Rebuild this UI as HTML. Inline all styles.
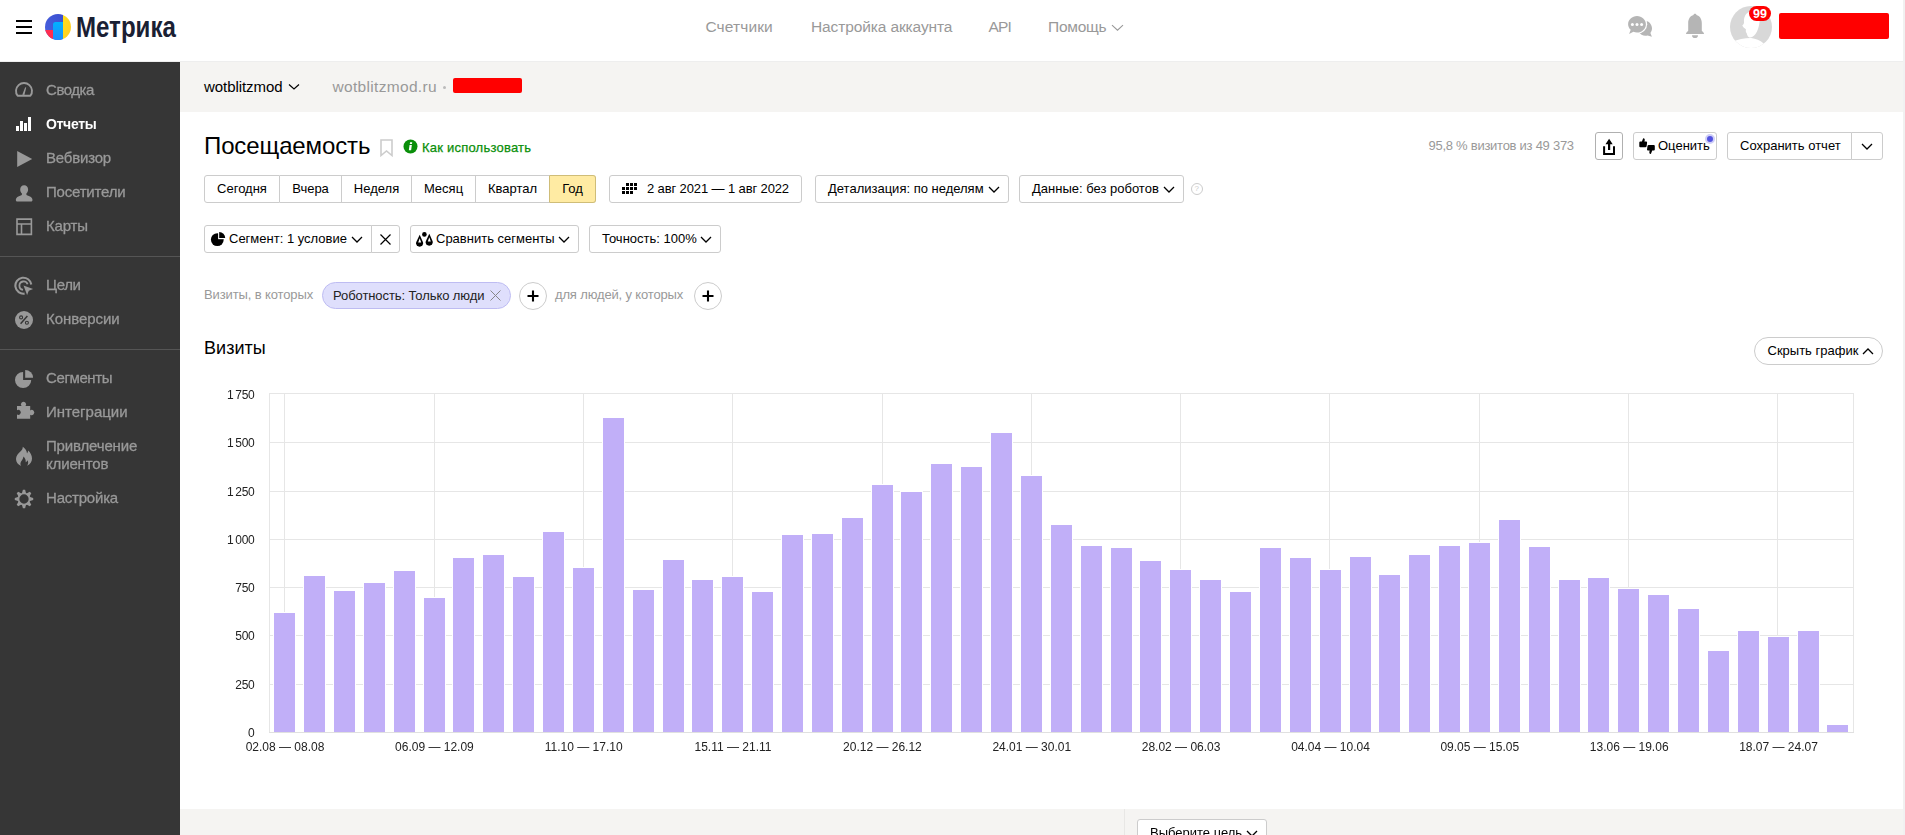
<!DOCTYPE html>
<html lang="ru">
<head>
<meta charset="utf-8">
<title>Посещаемость — Яндекс.Метрика</title>
<style>
*{box-sizing:border-box;margin:0;padding:0}
html,body{width:1905px;height:835px;overflow:hidden;background:#fff}
body{position:relative;font-family:"Liberation Sans",Arial,sans-serif;font-size:13px;color:#000}
.abs{position:absolute}
.t{position:absolute;white-space:nowrap;line-height:1}
/* header */
.header{position:absolute;left:0;top:0;width:1905px;height:62px;background:#fff;border-bottom:1px solid #eee}
.burger{position:absolute;left:16px;top:20px;width:16px;height:14px}
.burger i{position:absolute;left:0;width:16px;height:2px;background:#000}
.nav{color:#999;font-size:15.500px}
/* sidebar */
.sidebar{position:absolute;left:0;top:62px;width:180px;height:773px;background:#363636}
.sidebar .sep{position:absolute;left:0;width:180px;height:1px;background:#555}
.mi{position:absolute;left:46px;color:#999;font-size:15px;white-space:nowrap;line-height:18px;-webkit-text-stroke:.3px #999;will-change:transform}
.mi.act{color:#fff;font-weight:bold;font-size:14px;-webkit-text-stroke:0}
.ic{position:absolute}
/* band */
.band{position:absolute;left:180px;top:62px;width:1723px;height:50px;background:#f5f4f2}
.strip{position:absolute;left:1903px;top:0;width:2px;height:835px;background:#f1f1f1}
.bottom{position:absolute;left:180px;top:809px;width:1723px;height:26px;background:#f5f4f2}
/* buttons */
.btn{position:absolute;height:28px;border:1px solid #ccc;border-radius:3px;background:#fff;font-size:13px;line-height:26px;white-space:nowrap;color:#000}
.btn .t{line-height:26px;top:0}
.grp{position:absolute;left:204px;top:175px;height:28px;display:flex}
.grp div{height:28px;border:1px solid #ccc;border-left-width:0;line-height:26px;text-align:center;font-size:13px;background:#fff}
.grp div:first-child{border-left-width:1px;border-radius:3px 0 0 3px}
.grp div:last-child{border-radius:0 3px 3px 0;background:#ffeba3;border-color:#cfbd78}
.chev{position:absolute}
.chart{position:absolute;left:0;top:0}
</style>
</head>
<body>

<!-- ===== header ===== -->
<div class="header">
  <div class="burger"><i style="top:0"></i><i style="top:6px"></i><i style="top:12px"></i></div>
  <svg class="abs" style="left:45px;top:14px" width="26" height="26" viewBox="0 0 26 26">
    <defs>
      <clipPath id="lc"><circle cx="13" cy="13" r="13"/></clipPath>
      <linearGradient id="lg1" x1="0" y1="1" x2="1" y2="0"><stop offset="0" stop-color="#4a63e0"/><stop offset="1" stop-color="#3b4fd0"/></linearGradient>
      <linearGradient id="lg2" x1="0" y1="0" x2="1" y2="1"><stop offset="0" stop-color="#ffe11a"/><stop offset="1" stop-color="#ffc928"/></linearGradient>
      <linearGradient id="lg3" x1="0" y1="0" x2="0" y2="1"><stop offset="0" stop-color="#00b2ff"/><stop offset="1" stop-color="#1e8cff"/></linearGradient>
    </defs>
    <g clip-path="url(#lc)">
      <rect x="0" y="0" width="18" height="26" fill="url(#lg1)"/>
      <rect x="0" y="16" width="8" height="10" fill="#ff2d4f"/>
      <rect x="18" y="0" width="8" height="26" fill="url(#lg2)"/>
      <path d="M8 10.5a2.5 2.5 0 0 1 2.500-2.500H18V26H8z" fill="url(#lg3)"/>
    </g>
  </svg>
  <div class="t" id="logo" style="left:75.800px;top:12.500px;font-size:29px;font-weight:bold;color:#1a2033;transform-origin:0 0;transform:scaleX(.83)">Метрика</div>

  <div class="t nav" id="n1" style="letter-spacing:0.102px;margin-top:-.400px;left:705.500px;top:19px">Счетчики</div>
  <div class="t nav" id="n2" style="letter-spacing:-0.120px;margin-top:-.400px;left:811px;top:19px">Настройка аккаунта</div>
  <div class="t nav" id="n3" style="letter-spacing:-0.892px;margin-top:-.400px;left:988.500px;top:19px">API</div>
  <div class="t nav" id="n4" style="letter-spacing:-0.235px;margin-top:-.400px;left:1048px;top:19px">Помощь</div>
  <svg class="abs" style="left:1110.500px;top:24px" width="13" height="8" viewBox="0 0 13 8"><path d="M1 1.200l5.500 5 5.500-5" fill="none" stroke="#999" stroke-width="1.100"/></svg>

  <!-- chat icon -->
  <svg class="abs" style="left:1626px;top:13px" width="28" height="26" viewBox="1626 13 28 26">
    <path d="M1644.300 20.700a7.600 7.600 0 0 1 6.100 12.200l1.500 3.900-4.300-1.300a7.600 7.600 0 1 1-3.300-14.800z" fill="#b5b5b5"/>
    <ellipse cx="1637" cy="24.200" rx="10.200" ry="9.600" fill="#fff"/>
    <path d="M1637 15.900c4.900 0 8.900 3.700 8.900 8.300s-4 8.300-8.900 8.300c-1.300 0-2.500-.2-3.600-.7l-4.300 2.100 1.600-4.100c-1.600-1.500-2.600-3.500-2.600-5.600 0-4.600 4-8.300 8.900-8.300z" fill="#b5b5b5"/>
    <circle cx="1632.400" cy="24.500" r="1.500" fill="#fff"/><circle cx="1637" cy="24.500" r="1.500" fill="#fff"/><circle cx="1641.600" cy="24.500" r="1.500" fill="#fff"/>
  </svg>
  <!-- bell -->
  <svg class="abs" style="left:1685px;top:13px" width="20" height="26" viewBox="1685 13 20 26">
    <path d="M1695 13.700c.9 0 1.500.6 1.500 1.400 3.200.9 5.300 3.900 5.300 8.100v7.600l2.100 2.300v.9h-17.800v-.9l2.100-2.300v-7.600c0-4.200 2.100-7.200 5.300-8.100 0-.8.600-1.400 1.500-1.400z" fill="#b5b5b5"/>
    <path d="M1692 35.200h6a3 2.800 0 0 1-6 0z" fill="#b5b5b5"/>
  </svg>
  <!-- avatar -->
  <svg class="abs" style="left:1730px;top:6px" width="42" height="42" viewBox="0 0 42 42">
    <defs><clipPath id="av"><circle cx="21" cy="21" r="21"/></clipPath></defs>
    <g clip-path="url(#av)">
      <rect width="42" height="42" fill="#d8d8d8"/>
      <path d="M15 10C17 5 26 3 29 9c1.500 4 .5 11-2 16.500-2 4-4.500 6.300-7.500 5.900l-1.600-1c-.9-1.400-.9-2.400-1.300-3.300-1.100-1.100-.8-2.600-.7-3.900-1.900-1.200-2.900-2.200-3.600-3.600 1.200-1.100 1.700-2.100 1.700-3-.2-2.600 0-4.600 1-6.600z" fill="#fff"/>
      <path d="M0 36.500Q12 32 21.200 32.100 28 33 33.700 37.400L42 42H0z" fill="#fff"/>
    </g>
  </svg>
  <div class="abs" style="left:1749px;top:6px;width:22px;height:15px;border-radius:7.500px;background:#f00"></div>
  <div class="t" id="badge" style="left:1753px;top:7.500px;font-size:12.500px;font-weight:bold;color:#fff">99</div>
  <div class="abs" style="left:1778.500px;top:13px;width:110px;height:25.500px;background:#f00;border-radius:2px"></div>
</div>

<!-- ===== sidebar ===== -->
<div class="sidebar"></div>
<div class="abs" style="left:0;top:256px;width:180px;height:1px;background:#555"></div>
<div class="abs" style="left:0;top:349px;width:180px;height:1px;background:#555"></div>
<div id="s1" class="mi" style="letter-spacing:-0.448px;top:81px">Сводка</div>
<div id="s2" class="mi act" style="letter-spacing:-0.319px;top:115px">Отчеты</div>
<div id="s3" class="mi" style="letter-spacing:-0.188px;top:149px">Вебвизор</div>
<div id="s4" class="mi" style="letter-spacing:-0.201px;top:183px">Посетители</div>
<div id="s5" class="mi" style="letter-spacing:-0.188px;top:217px">Карты</div>
<div id="s6" class="mi" style="letter-spacing:-0.393px;top:276px">Цели</div>
<div id="s7" class="mi" style="letter-spacing:-0.051px;top:310px">Конверсии</div>
<div id="s8" class="mi" style="letter-spacing:-0.393px;top:369px">Сегменты</div>
<div id="s9" class="mi" style="letter-spacing:-0.003px;top:403px">Интеграции</div>
<div id="s10" class="mi" style="letter-spacing:-0.159px;top:437px">Привлечение<br>клиентов</div>
<div id="s11" class="mi" style="letter-spacing:-0.205px;top:489px">Настройка</div>
<!-- sidebar icons -->
<svg class="abs" style="left:14px;top:81px" width="20" height="17" viewBox="14 81 20 17"><path d="M17.600 95.800A8 8 0 1 1 30.400 95.800z" fill="none" stroke="#999" stroke-width="1.900" stroke-linejoin="round"/><path d="M22.300 94.800l2.900-7.600 1 .4-1.800 7.500z" fill="#999"/></svg>
<svg class="abs" style="left:15px;top:116px" width="18" height="16" viewBox="15 116 18 16"><path d="M16 126h3v5h-3zM20 121h3v10h-3zM24 123h3v8h-3zM28 117h3v14h-3z" fill="#fff"/></svg>
<svg class="abs" style="left:16px;top:150px" width="18" height="18" viewBox="16 150 18 18"><path d="M17.200 151.100L32.200 159 17.200 166.900z" fill="#999"/></svg>
<svg class="abs" style="left:15px;top:184px" width="19" height="19" viewBox="15 184 19 19"><path d="M24.100 185.200c2.500 0 4 1.800 4 4.300 0 1.700-.7 3.200-1.700 4 -.3.900.200 1.600 1.200 2 2.600.9 4.700 1.800 4.900 4.300 0 .9-.500 1.800-1.500 1.800H17.300c-1 0-1.500-.9-1.500-1.800.2-2.500 2.300-3.400 4.900-4.300 1-.4 1.500-1.100 1.200-2-1-.8-1.700-2.300-1.700-4 0-2.500 1.500-4.300 3.900-4.300z" fill="#999"/></svg>
<svg class="abs" style="left:15px;top:217px" width="19" height="20" viewBox="15 217 19 20"><path d="M17 219.100h14.400v15.300H17zM17 224h14.400M21.500 224v10.400" fill="none" stroke="#999" stroke-width="1.600"/></svg>
<svg class="abs" style="left:14px;top:276px" width="21" height="21" viewBox="14 276 21 21"><path d="M31.300 284.500A8 8 0 1 0 24.600 293.600" fill="none" stroke="#999" stroke-width="2.100"/><path d="M27.600 284.300A4.200 4.200 0 1 0 23 289.800" fill="none" stroke="#999" stroke-width="1.800"/><path d="M23.500 285.400l9.600 3.600-4.300 1.800-1.700 4.300z" fill="#999"/></svg>
<svg class="abs" style="left:14px;top:310px" width="20" height="20" viewBox="14 310 20 20"><circle cx="24" cy="320" r="9" fill="#999"/><path d="M20.600 323.800l6.800-7.800" stroke="#363636" stroke-width="1.500" fill="none"/><circle cx="21.100" cy="317.400" r="1.500" fill="none" stroke="#363636" stroke-width="1.100"/><circle cx="26.900" cy="322.700" r="1.500" fill="none" stroke="#363636" stroke-width="1.100"/></svg>
<svg class="abs" style="left:14px;top:369px" width="20" height="20" viewBox="14 369 20 20"><path d="M23.100 371.900v8.100h8.100a8.100 8.100 0 1 1-8.100-8.100z" fill="#999"/><path d="M25.200 369.900a7.900 7.900 0 0 1 7.900 7.900h-7.900z" fill="#999"/></svg>
<svg class="abs" style="left:16px;top:400px" width="20" height="20" viewBox="16 400 20 20"><path d="M17 406.100h4.500a2.600 2.600 0 1 1 4 0h4.700v4.300a2.600 2.600 0 1 1 0 4.300v4H17v-4.200a2.500 2.500 0 1 0 0-4.300z" fill="#999"/></svg>
<svg class="abs" style="left:15px;top:446px" width="18" height="21" viewBox="15 446 18 21"><path d="M22.800 446.800c2.600 1.800 4 4.300 4.200 6.600.7-.6 1.100-1.600 1.300-2.800 2.200 2.400 3.700 5 3.700 8 0 3.200-1.700 5.700-5 7.200 1.400-1.700 1.500-3.600.600-5.500-.5 1-1.100 1.600-1.900 1.900.3-2.300-.5-4.200-2.300-5.800-.1 2.200-1.300 3.600-2.300 5-.9 1.500-.9 3 .1 4.600-3.200-1-5.200-3.600-5.200-6.900 0-3.400 2.300-5.600 4.400-7.500 1.400-1.300 2.400-2.700 2.400-4.800z" fill="#999"/></svg>
<svg class="abs" style="left:14px;top:489px" width="20" height="20" viewBox="14 489 20 20"><circle cx="24" cy="499" r="5.500" fill="none" stroke="#999" stroke-width="1.700"/><g fill="#999"><path id="gt" d="M21.800 493.800l1.100-4h2.200l1.100 4z"/><use href="#gt" transform="rotate(45 24 499)"/><use href="#gt" transform="rotate(90 24 499)"/><use href="#gt" transform="rotate(135 24 499)"/><use href="#gt" transform="rotate(180 24 499)"/><use href="#gt" transform="rotate(225 24 499)"/><use href="#gt" transform="rotate(270 24 499)"/><use href="#gt" transform="rotate(315 24 499)"/></g></svg>


<!-- ===== band ===== -->
<div class="band"></div>
<div class="t" id="b1" style="letter-spacing:-0.060px;left:204px;top:79px;font-size:15px">wotblitzmod</div>
<svg class="abs" style="left:288px;top:83px" width="12" height="8" viewBox="0 0 12 8"><path d="M1 1.500l5 4.500 5-4.500" fill="none" stroke="#000" stroke-width="1.200"/></svg>
<div class="t" id="b2" style="letter-spacing:0.320px;left:332.500px;top:78.500px;font-size:15.500px;color:#999">wotblitzmod.ru</div>
<div class="abs" style="left:443px;top:86px;width:3px;height:3px;border-radius:1.500px;background:#bbb"></div>
<div class="abs" style="left:453px;top:78px;width:69px;height:14.500px;background:#f00;border-radius:2px"></div>

<!-- ===== title row ===== -->
<div class="t" id="title" style="letter-spacing:-0.112px;left:204px;top:134px;font-size:24px">Посещаемость</div>
<svg class="abs" style="left:380px;top:139px" width="13" height="18" viewBox="0 0 13 18"><path d="M1 1h11v15.500L6.500 12 1 16.500z" fill="none" stroke="#ccc" stroke-width="1.600"/></svg>
<svg class="abs" style="left:402.500px;top:139px" width="15" height="15" viewBox="0 0 15 15"><circle cx="7.500" cy="7.500" r="7" fill="#0a8f0a"/><path d="M6.200 6h2.300v5.200H6.200zM6.300 3.200h2.200v1.900H6.300z" fill="#fff" transform="skewX(-8) translate(1.200 0)"/></svg>
<div class="t" id="how" style="letter-spacing:0.221px;left:422px;top:140.500px;font-size:13px;color:#0a8f0a;-webkit-text-stroke:.25px #0a8f0a">Как использовать</div>

<div class="t" id="pct" style="letter-spacing:-0.263px;left:1428.500px;top:139px;font-size:13px;color:#999">95,8 % визитов из 49 373</div>
<div class="btn" style="left:1595px;top:132px;width:28px;border-color:#b0b0b0">
  <svg class="abs" style="left:5px;top:5px" width="16" height="18" viewBox="1601 138 16 18"><path d="M1609.100 138.700l3.600 5.500h-2.500v5.800h-2.200v-5.800h-2.500z" fill="#000"/><path d="M1604.100 146.300v7.700h9.900v-7.700" fill="none" stroke="#000" stroke-width="2"/></svg>
</div>
<div class="btn" style="left:1633px;top:132px;width:84px">
  <svg class="abs" style="left:4px;top:4px" width="20" height="20" viewBox="1638 137 20 20"><path id="thu" d="M1639.300 142.600q0-1 1-1h1.600l1.300-3.400q1.800-.1 1.600 1.700l-.4 1.700h1.700q1.100 0 1 1.100l-.5 3.500q-.2 1-1.200 1h-5.100q-1 0-1-1z" fill="#000"/><use href="#thu" transform="rotate(180 1647.050 146.050)"/></svg>
  <span class="t" style="left:24px">Оценить</span>
  <i class="abs" style="left:71px;top:1px;width:10px;height:10px;border-radius:5px;background:#5252e0;border:2px solid #cfcff7"></i>
</div>
<div class="btn" style="left:1727px;top:132px;width:125px;border-radius:3px 0 0 3px"><span class="t" style="left:12px">Сохранить отчет</span></div>
<div class="btn" style="left:1851px;top:132px;width:32px;border-radius:0 3px 3px 0">
  <svg class="abs" style="left:9px;top:10px" width="12" height="8" viewBox="0 0 12 8"><path d="M1 1l5 5 5-5" fill="none" stroke="#000" stroke-width="1.300"/></svg>
</div>

<!-- ===== period row ===== -->
<div class="grp">
  <div style="width:76px">Сегодня</div><div style="width:62px">Вчера</div><div style="width:70px">Неделя</div><div style="width:64px">Месяц</div><div style="width:74px;border-right-color:#cfbd78">Квартал</div><div style="width:46px">Год</div>
</div>
<div class="btn" style="left:609px;top:175px;width:193px">
  <svg class="abs" style="left:12px;top:7px" width="15" height="11" viewBox="0 0 15 11"><g fill="#000"><rect x="4" y="0" width="3" height="3"/><rect x="8" y="0" width="3" height="3"/><rect x="12" y="0" width="3" height="3"/><rect x="0" y="4" width="3" height="3"/><rect x="4" y="4" width="3" height="3"/><rect x="8" y="4" width="3" height="3"/><rect x="12" y="4" width="3" height="3"/><rect x="0" y="8" width="3" height="3"/><rect x="4" y="8" width="3" height="3"/><rect x="8" y="8" width="3" height="3"/></g></svg>
  <span class="t" id="dt" style="letter-spacing:-0.120px;left:37px">2 авг 2021 — 1 авг 2022</span>
</div>
<div class="btn" style="left:815px;top:175px;width:194px"><span class="t" style="left:12px">Детализация: по неделям</span>
  <svg class="abs" style="left:172px;top:10px" width="12" height="8" viewBox="0 0 12 8"><path d="M1 1l5 5 5-5" fill="none" stroke="#000" stroke-width="1.300"/></svg></div>
<div class="btn" style="left:1019px;top:175px;width:165px"><span class="t" style="left:12px">Данные: без роботов</span>
  <svg class="abs" style="left:143px;top:10px" width="12" height="8" viewBox="0 0 12 8"><path d="M1 1l5 5 5-5" fill="none" stroke="#000" stroke-width="1.300"/></svg></div>
<div class="abs" style="left:1190.500px;top:183px;width:12px;height:12px;border:1px solid #ccc;border-radius:6px"></div>
<div class="t" style="left:1194.500px;top:185px;font-size:8px;color:#ccc">?</div>

<!-- ===== segment row ===== -->
<div class="btn" style="left:204px;top:225px;width:168px;border-radius:3px 0 0 3px">
  <svg class="abs" style="left:5px;top:5px" width="17" height="17" viewBox="210 231 17 17"><circle cx="217.300" cy="239.600" r="6.400" fill="#000"/><path d="M218.100 239.200V230h10v9.200z" fill="#fff"/><path d="M219.200 232.100a6 6 0 0 1 6 6h-6z" fill="#000"/></svg>
  <span class="t" style="left:24px">Сегмент: 1 условие</span>
  <svg class="abs" style="left:146px;top:10px" width="12" height="8" viewBox="0 0 12 8"><path d="M1 1l5 5 5-5" fill="none" stroke="#000" stroke-width="1.300"/></svg>
</div>
<div class="btn" style="left:371px;top:225px;width:29px;border-radius:0 3px 3px 0">
  <svg class="abs" style="left:8px;top:8px" width="11" height="11" viewBox="0 0 11 11"><path d="M.5.5l10 10M10.500.5l-10 10" fill="none" stroke="#000" stroke-width="1.200"/></svg>
</div>
<div class="btn" style="left:410px;top:225px;width:169px">
  <svg class="abs" style="left:4px;top:6px" width="19" height="16" viewBox="415 232 19 16"><path d="M419.700 234.800l3.200 7.200a3.500 3.500 0 1 1-6.600 0z" fill="#000"/><path d="M419.700 238.200l1.500 4.400h-3z" fill="#fff"/><path d="M429.300 233.800l3.200 7.200a3.500 3.500 0 1 1-6.600 0z" fill="#000"/><path d="M429.300 237.200l1.500 4.400h-3z" fill="#fff"/><circle cx="424.400" cy="234.400" r="2.300" fill="#000"/></svg>
  <span class="t" style="left:25px">Сравнить сегменты</span>
  <svg class="abs" style="left:147px;top:10px" width="12" height="8" viewBox="0 0 12 8"><path d="M1 1l5 5 5-5" fill="none" stroke="#000" stroke-width="1.300"/></svg>
</div>
<div class="btn" style="left:589px;top:225px;width:132px"><span class="t" style="left:12px">Точность: 100%</span>
  <svg class="abs" style="left:110px;top:10px" width="12" height="8" viewBox="0 0 12 8"><path d="M1 1l5 5 5-5" fill="none" stroke="#000" stroke-width="1.300"/></svg></div>

<!-- ===== filter row ===== -->
<div class="t" id="f1" style="letter-spacing:-0.118px;left:204px;top:288px;font-size:13px;color:#999">Визиты, в которых</div>
<div class="abs" style="left:322px;top:282px;width:189px;height:27px;border-radius:13.500px;background:#dfdffc;border:1px solid #bebcf2"></div>
<div class="t" id="f2" style="letter-spacing:-0.084px;left:333px;top:289px;font-size:13px;color:#222">Роботность: Только люди</div>
<svg class="abs" style="left:490px;top:290px" width="11" height="11" viewBox="0 0 11 11"><path d="M.5.5l10 10M10.500.5l-10 10" fill="none" stroke="#888" stroke-width="1"/></svg>
<div class="abs" style="left:519px;top:282px;width:28px;height:28px;border-radius:14px;border:1px solid #ccc;background:#fff"></div>
<svg class="abs" style="left:527px;top:290px" width="12" height="12" viewBox="0 0 12 12"><path d="M6 .5v11M.5 6h11" stroke="#000" stroke-width="2.100"/></svg>
<div class="t" id="f3" style="letter-spacing:-0.152px;left:555px;top:288px;font-size:13px;color:#999">для людей, у которых</div>
<div class="abs" style="left:694px;top:282px;width:28px;height:28px;border-radius:14px;border:1px solid #ccc;background:#fff"></div>
<svg class="abs" style="left:702px;top:290px" width="12" height="12" viewBox="0 0 12 12"><path d="M6 .5v11M.5 6h11" stroke="#000" stroke-width="2.100"/></svg>

<!-- ===== chart ===== -->
<div class="t" id="viz" style="letter-spacing:0.048px;left:204px;top:339px;font-size:18px">Визиты</div>
<div class="btn" style="left:1754px;top:337px;width:129px;border-radius:14px"><span class="t" style="left:12.500px">Скрыть график</span>
  <svg class="abs" style="left:106.500px;top:9px" width="12" height="8" viewBox="0 0 12 8"><path d="M1 7l5-5 5 5" fill="none" stroke="#000" stroke-width="1.300"/></svg></div>
<svg class="chart" width="1905" height="835" viewBox="0 0 1905 835">
<g fill="#e6e6e6">
<rect x="269" y="732" width="1585" height="1"/>
<rect x="269" y="684" width="1585" height="1"/>
<rect x="269" y="635" width="1585" height="1"/>
<rect x="269" y="587" width="1585" height="1"/>
<rect x="269" y="539" width="1585" height="1"/>
<rect x="269" y="491" width="1585" height="1"/>
<rect x="269" y="442" width="1585" height="1"/>
<rect x="269" y="393" width="1585" height="1"/>
<rect x="284" y="393" width="1" height="340"/>
<rect x="434" y="393" width="1" height="340"/>
<rect x="583" y="393" width="1" height="340"/>
<rect x="732" y="393" width="1" height="340"/>
<rect x="882" y="393" width="1" height="340"/>
<rect x="1031" y="393" width="1" height="340"/>
<rect x="1180" y="393" width="1" height="340"/>
<rect x="1329" y="393" width="1" height="340"/>
<rect x="1479" y="393" width="1" height="340"/>
<rect x="1628" y="393" width="1" height="340"/>
<rect x="1777" y="393" width="1" height="340"/>
<rect x="269" y="393" width="1" height="340"/>
<rect x="1853" y="393" width="1" height="340"/>
</g>
<g fill="#c1aff8" stroke="#fff" stroke-width="1">
<rect x="273.5" y="612.50" width="22" height="120.50"/>
<rect x="303.5" y="575.50" width="22" height="157.50"/>
<rect x="333.5" y="590.50" width="22" height="142.50"/>
<rect x="363.5" y="582.50" width="22" height="150.50"/>
<rect x="393.5" y="570.50" width="22" height="162.50"/>
<rect x="423.5" y="597.50" width="22" height="135.50"/>
<rect x="452.5" y="557.50" width="22" height="175.50"/>
<rect x="482.5" y="554.50" width="22" height="178.50"/>
<rect x="512.5" y="576.50" width="22" height="156.50"/>
<rect x="542.5" y="531.50" width="22" height="201.50"/>
<rect x="572.5" y="567.50" width="22" height="165.50"/>
<rect x="602.5" y="417.50" width="22" height="315.50"/>
<rect x="632.5" y="589.50" width="22" height="143.50"/>
<rect x="662.5" y="559.50" width="22" height="173.50"/>
<rect x="691.5" y="579.50" width="22" height="153.50"/>
<rect x="721.5" y="576.50" width="22" height="156.50"/>
<rect x="751.5" y="591.50" width="22" height="141.50"/>
<rect x="781.5" y="534.50" width="22" height="198.50"/>
<rect x="811.5" y="533.50" width="22" height="199.50"/>
<rect x="841.5" y="517.50" width="22" height="215.50"/>
<rect x="871.5" y="484.50" width="22" height="248.50"/>
<rect x="900.5" y="491.50" width="22" height="241.50"/>
<rect x="930.5" y="463.50" width="22" height="269.50"/>
<rect x="960.5" y="466.50" width="22" height="266.50"/>
<rect x="990.5" y="432.50" width="22" height="300.50"/>
<rect x="1020.5" y="475.50" width="22" height="257.50"/>
<rect x="1050.5" y="524.50" width="22" height="208.50"/>
<rect x="1080.5" y="545.50" width="22" height="187.50"/>
<rect x="1110.5" y="547.50" width="22" height="185.50"/>
<rect x="1139.5" y="560.50" width="22" height="172.50"/>
<rect x="1169.5" y="569.50" width="22" height="163.50"/>
<rect x="1199.5" y="579.50" width="22" height="153.50"/>
<rect x="1229.5" y="591.50" width="22" height="141.50"/>
<rect x="1259.5" y="547.50" width="22" height="185.50"/>
<rect x="1289.5" y="557.50" width="22" height="175.50"/>
<rect x="1319.5" y="569.50" width="22" height="163.50"/>
<rect x="1349.5" y="556.50" width="22" height="176.50"/>
<rect x="1378.5" y="574.50" width="22" height="158.50"/>
<rect x="1408.5" y="554.50" width="22" height="178.50"/>
<rect x="1438.5" y="545.50" width="22" height="187.50"/>
<rect x="1468.5" y="542.50" width="22" height="190.50"/>
<rect x="1498.5" y="519.50" width="22" height="213.50"/>
<rect x="1528.5" y="546.50" width="22" height="186.50"/>
<rect x="1558.5" y="579.50" width="22" height="153.50"/>
<rect x="1587.5" y="577.50" width="22" height="155.50"/>
<rect x="1617.5" y="588.50" width="22" height="144.50"/>
<rect x="1647.5" y="594.50" width="22" height="138.50"/>
<rect x="1677.5" y="608.50" width="22" height="124.50"/>
<rect x="1707.5" y="650.50" width="22" height="82.50"/>
<rect x="1737.5" y="630.50" width="22" height="102.50"/>
<rect x="1767.5" y="636.50" width="22" height="96.50"/>
<rect x="1797.5" y="630.50" width="22" height="102.50"/>
<rect x="1826.5" y="724.50" width="22" height="8.50"/>
</g>
<rect x="269" y="732" width="1585" height="1" fill="#e0e0e0"/>
<g font-family="'Liberation Sans', Arial, sans-serif" font-size="12" fill="#222" style="word-spacing:-1.400px;letter-spacing:-.200px">
<text x="254.6" y="737.0" text-anchor="end">0</text>
<text x="254.6" y="689.0" text-anchor="end">250</text>
<text x="254.6" y="640.0" text-anchor="end">500</text>
<text x="254.6" y="592.0" text-anchor="end">750</text>
<text x="254.6" y="544.0" text-anchor="end">1 000</text>
<text x="254.6" y="496.0" text-anchor="end">1 250</text>
<text x="254.6" y="447.0" text-anchor="end">1 500</text>
<text x="254.6" y="399.0" text-anchor="end">1 750</text>
</g>
<g font-family="'Liberation Sans', Arial, sans-serif" font-size="12" fill="#222">
<text x="285.0" y="751.2" text-anchor="middle">02.08 — 08.08</text>
<text x="434.4" y="751.2" text-anchor="middle">06.09 — 12.09</text>
<text x="583.7" y="751.2" text-anchor="middle">11.10 — 17.10</text>
<text x="733.0" y="751.2" text-anchor="middle">15.11 — 21.11</text>
<text x="882.4" y="751.2" text-anchor="middle">20.12 — 26.12</text>
<text x="1031.8" y="751.2" text-anchor="middle">24.01 — 30.01</text>
<text x="1181.1" y="751.2" text-anchor="middle">28.02 — 06.03</text>
<text x="1330.5" y="751.2" text-anchor="middle">04.04 — 10.04</text>
<text x="1479.8" y="751.2" text-anchor="middle">09.05 — 15.05</text>
<text x="1629.2" y="751.2" text-anchor="middle">13.06 — 19.06</text>
<text x="1778.5" y="751.2" text-anchor="middle">18.07 — 24.07</text>
</g>
</svg>

<!-- ===== bottom ===== -->
<div class="bottom"></div>
<div class="abs" style="left:1124px;top:809px;width:1px;height:26px;background:#e8e7e5"></div>
<div class="btn" style="left:1137px;top:819px;width:130px"><span class="t" style="left:12px">Выберите цель</span>
  <svg class="abs" style="left:108px;top:10px" width="12" height="8" viewBox="0 0 12 8"><path d="M1 1l5 5 5-5" fill="none" stroke="#000" stroke-width="1.300"/></svg></div>
<div class="strip"></div>
</body>
</html>
